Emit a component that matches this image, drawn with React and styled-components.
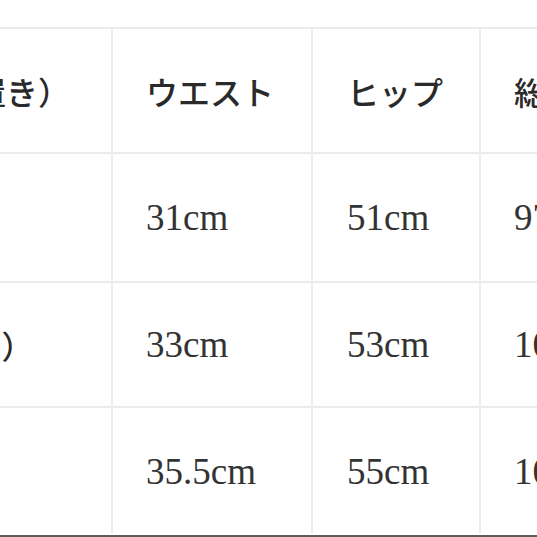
import React from "react";
import styled, { createGlobalStyle } from "styled-components";

const Global = createGlobalStyle`
  html, body { margin: 0; padding: 0; background: #fff; overflow: hidden; }
  body { width: 537px; height: 537px; }
`;

const Page = styled.div`
  width: 537px;
  height: 537px;
  overflow: hidden;
  display: flex;
  flex-direction: column;
  background: #fff;
`;

const Table = styled.div`
  margin-top: 27px;
  margin-left: -218px;
  display: grid;
  grid-template-columns: 329px 198px 166px 200px;
  grid-template-rows: 123px 127px 123px 126px;
  gap: 2px;
  padding-top: 2px;
  background: #ececec;
  width: max-content;
`;

const Cell = styled.div`
  background: #fff;
  display: flex;
  align-items: center;
  padding-left: ${(p) => (p.$pad ? p.$pad : 33)}px;
  white-space: nowrap;
  overflow: hidden;
  color: ${(p) => (p.$jp ? "#2a2a2a" : "#333")};
  font-family: ${(p) =>
    p.$jp
      ? `"Noto Sans CJK JP", "Noto Sans", sans-serif`
      : `"Liberation Serif", "Noto Sans CJK JP", serif`};
  font-size: ${(p) => (p.$jp ? 32 : 37)}px;
  font-weight: ${(p) => (p.$jp ? 500 : 400)};
  letter-spacing: 0;
`;

const BottomBar = styled.div`
  margin-top: 1px;
  height: 3px;
  background: #5c5c5c;
`;

const rows = [
  [
    { t: "サイズ（平置き）", jp: true },
    { t: "ウエスト", jp: true },
    { t: "ヒップ", jp: true },
    { t: "総丈", jp: true },
  ],
  [{ t: "S", jp: true }, { t: "31cm" }, { t: "51cm" }, { t: "97cm" }],
  [{ t: "M（ゆったり）", jp: true }, { t: "33cm" }, { t: "53cm" }, { t: "100cm" }],
  [{ t: "L", jp: true }, { t: "35.5cm" }, { t: "55cm" }, { t: "103cm" }],
];

export default function App() {
  return (
    <>
      <Global />
      <Page>
        <Table>
          {rows.map((r, i) =>
            r.map((c, j) => (
              <Cell key={`${i}-${j}`} $jp={c.jp} $pad={j === 2 ? 34 : 33}>
                {c.t}
              </Cell>
            ))
          )}
        </Table>
        <BottomBar />
      </Page>
    </>
  );
}
